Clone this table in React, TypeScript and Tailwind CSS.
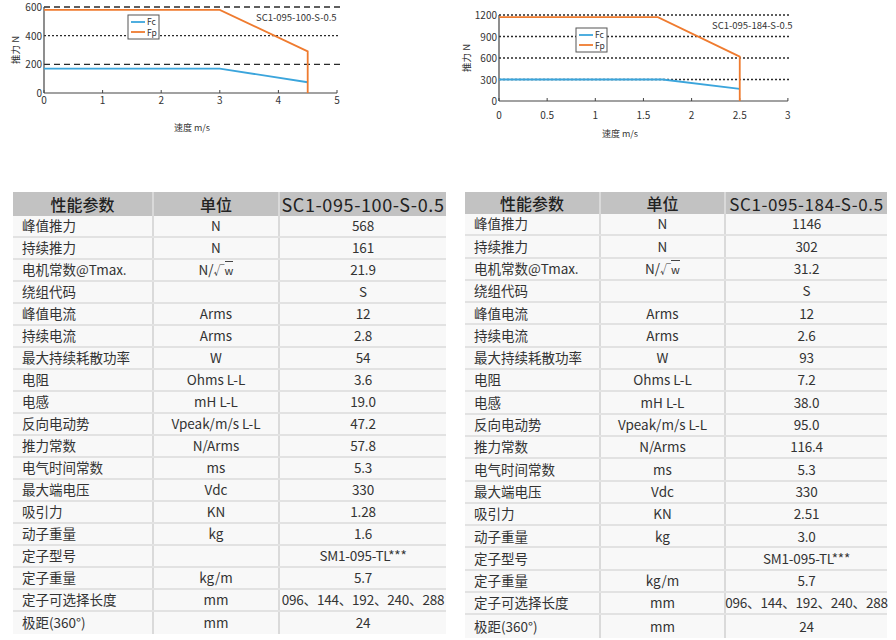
import React from "react";

type Pt = [number, number];

interface ChartSpec {
  width: number;
  x0: number;
  xUnit: number;
  xStep: number;
  xTicks: string[];
  y0: number;
  yUnit: number;
  yTicks: { v: number; label: string; dash: string }[];
  gridEnd: number;
  fp: Pt[];
  fc: Pt[];
  legend: { x: number; y: number };
  title: { x: number; y: number; text: string };
  yLabelX: number;
  xLabel: { x: number; y: number };
  tickLabelY: number;
}

const LEFT_CHART: ChartSpec = {
  width: 350,
  x0: 44,
  xUnit: 58.6,
  xStep: 1,
  xTicks: ["0", "1", "2", "3", "4", "5"],
  y0: 93,
  yUnit: 86 / 600,
  yTicks: [
    { v: 600, label: "600", dash: "6 4" },
    { v: 400, label: "400", dash: "2 2" },
    { v: 200, label: "200", dash: "6 4" },
    { v: 0, label: "0", dash: "" },
  ],
  gridEnd: 340,
  fp: [[0, 580], [3, 580], [4.5, 290], [4.5, 0]],
  fc: [[0, 170], [3, 170], [4.5, 75]],
  legend: { x: 128, y: 15 },
  title: { x: 256, y: 21, text: "SC1-095-100-S-0.5" },
  yLabelX: 16,
  xLabel: { x: 192, y: 131 },
  tickLabelY: 104,
};

const RIGHT_CHART: ChartSpec = {
  width: 340,
  x0: 39,
  xUnit: 96.3,
  xStep: 0.5,
  xTicks: ["0", "0.5", "1", "1.5", "2", "2.5", "3"],
  y0: 101,
  yUnit: 86 / 1200,
  yTicks: [
    { v: 1200, label: "1200", dash: "2 2" },
    { v: 900, label: "900", dash: "2 2" },
    { v: 600, label: "600", dash: "2 2" },
    { v: 300, label: "300", dash: "2 2" },
    { v: 0, label: "0", dash: "" },
  ],
  gridEnd: 329,
  fp: [[0, 1170], [1.65, 1170], [2.5, 620], [2.5, 0]],
  fc: [[0, 300], [1.7, 300], [2.5, 170]],
  legend: { x: 116, y: 28 },
  title: { x: 252, y: 29, text: "SC1-095-184-S-0.5" },
  yLabelX: 7,
  xLabel: { x: 160, y: 137 },
  tickLabelY: 119,
};

function ForceChart({ spec }: { spec: ChartSpec }) {
  const px = (v: number) => spec.x0 + v * spec.xUnit;
  const py = (v: number) => spec.y0 - v * spec.yUnit;
  const path = (pts: Pt[]) => pts.map(([x, y]) => `${px(x)},${py(y)}`).join(" ");
  const xEnd = px((spec.xTicks.length - 1) * spec.xStep);
  const font = "'Noto Sans CJK SC', 'Noto Sans', sans-serif";
  const yMid = (spec.y0 + py(spec.yTicks[0].v)) / 2;

  return (
    <svg width={spec.width} height={140} className="block shrink-0" style={{ fontFamily: font }}>
      {spec.yTicks.map((t) =>
        t.v === 0 ? null : (
          <line key={t.v} x1={spec.x0} x2={spec.gridEnd} y1={py(t.v)} y2={py(t.v)} stroke="#2a2a2a" strokeWidth={1.4} strokeDasharray={t.dash} />
        )
      )}
      <line x1={spec.x0} x2={xEnd} y1={spec.y0} y2={spec.y0} stroke="#444" strokeWidth={1.2} />
      <line x1={spec.x0} x2={spec.x0} y1={spec.y0} y2={py(spec.yTicks[0].v)} stroke="#444" strokeWidth={1.2} />
      {spec.xTicks.map((_, i) => (
        <line key={i} x1={px(i * spec.xStep)} x2={px(i * spec.xStep)} y1={spec.y0} y2={spec.y0 - 3} stroke="#444" strokeWidth={1} />
      ))}
      {spec.xTicks.map((l, i) => (
        <text key={l} x={px(i * spec.xStep)} y={spec.tickLabelY} fontSize={10} fill="#333" textAnchor="middle">{l}</text>
      ))}
      {spec.yTicks.map((t) => (
        <text key={t.label} x={spec.x0 - 2} y={py(t.v) + 4} fontSize={10} fill="#333" textAnchor="end">{t.label}</text>
      ))}
      <text x={spec.yLabelX} y={yMid} fontSize={9.5} fill="#333" textAnchor="middle" transform={`rotate(-90 ${spec.yLabelX} ${yMid})`} dominantBaseline="middle">
        推力   N
      </text>
      <text x={spec.xLabel.x} y={spec.xLabel.y} fontSize={9} fill="#333" textAnchor="middle">速度    m/s</text>
      <text x={spec.title.x} y={spec.title.y} fontSize={9.5} fill="#333">{spec.title.text}</text>

      <polyline points={path(spec.fc)} fill="none" stroke="#3ba5dc" strokeWidth={1.8} />
      <polyline points={path(spec.fp)} fill="none" stroke="#ef7b2f" strokeWidth={1.8} />

      <rect x={spec.legend.x} y={spec.legend.y} width={31} height={24} fill="#fff" stroke="#555" strokeWidth={1} />
      <line x1={spec.legend.x + 3} x2={spec.legend.x + 17} y1={spec.legend.y + 7} y2={spec.legend.y + 7} stroke="#3ba5dc" strokeWidth={1.8} />
      <line x1={spec.legend.x + 3} x2={spec.legend.x + 17} y1={spec.legend.y + 17} y2={spec.legend.y + 17} stroke="#ef7b2f" strokeWidth={1.8} />
      <text x={spec.legend.x + 19} y={spec.legend.y + 10} fontSize={8.5} fill="#333">Fc</text>
      <text x={spec.legend.x + 19} y={spec.legend.y + 20.5} fontSize={8.5} fill="#333">Fp</text>
    </svg>
  );
}

const PARAMS: [string, string][] = [
  ["峰值推力", "N"],
  ["持续推力", "N"],
  ["电机常数@Tmax.", "N/√w"],
  ["绕组代码", ""],
  ["峰值电流", "Arms"],
  ["持续电流", "Arms"],
  ["最大持续耗散功率", "W"],
  ["电阻", "Ohms L-L"],
  ["电感", "mH L-L"],
  ["反向电动势", "Vpeak/m/s L-L"],
  ["推力常数", "N/Arms"],
  ["电气时间常数", "ms"],
  ["最大端电压", "Vdc"],
  ["吸引力", "KN"],
  ["动子重量", "kg"],
  ["定子型号", ""],
  ["定子重量", "kg/m"],
  ["定子可选择长度", "mm"],
  ["极距(360°)", "mm"],
];

const LEFT_VALUES = ["568", "161", "21.9", "S", "12", "2.8", "54", "3.6", "19.0", "47.2", "57.8", "5.3", "330", "1.28", "1.6", "SM1-095-TL***", "5.7", "096、144、192、240、288", "24"];
const RIGHT_VALUES = ["1146", "302", "31.2", "S", "12", "2.6", "93", "7.2", "38.0", "95.0", "116.4", "5.3", "330", "2.51", "3.0", "SM1-095-TL***", "5.7", "096、144、192、240、288", "24"];

function Unit({ text }: { text: string }) {
  if (text === "N/√w") {
    return (
      <span>
        N/<span className="text-[11px]">√<span className="border-t border-[#444] text-[11px]">w</span></span>
      </span>
    );
  }
  return <span>{text}</span>;
}

function SpecTable({ model, values, cols, rowH, headH, modelSize }: { model: string; values: string[]; cols: string; rowH: string; headH: string; modelSize: string }) {
  return (
    <div className="flex flex-col">
      <div className={`grid ${cols} ${headH} bg-[#c2c2c2] text-[16px] font-medium leading-none text-[#222]`}>
        <div className="flex items-center justify-center border-r-2 border-[#d9d9d9]">性能参数</div>
        <div className="flex items-center justify-center border-r-2 border-[#d9d9d9]">单位</div>
        <div className={`flex items-center justify-center whitespace-nowrap font-normal tracking-[0.6px] ${modelSize}`}>{model}</div>
      </div>
      {PARAMS.map(([name, unit], i) => (
        <div key={name} className={`grid ${cols} ${rowH} border-b-2 border-[#e2e2e2] bg-[#f8f8f8] text-[13.5px] leading-none text-[#333] last:border-b-0`}>
          <div className="flex items-center border-r-2 border-[#dadada] pl-[9px]">{name}</div>
          <div className="flex items-center justify-center border-r-2 border-[#dadada]">
            <Unit text={unit} />
          </div>
          <div className="flex items-center justify-center whitespace-nowrap tracking-[-0.2px]">{values[i]}</div>
        </div>
      ))}
    </div>
  );
}

export default function App() {
  return (
    <div className="h-[640px] w-[896px] overflow-hidden bg-white font-['Noto_Sans_CJK_SC','Noto_Sans',sans-serif]">
      <div className="flex h-[140px]">
        <ForceChart spec={LEFT_CHART} />
        <div className="w-[110px] shrink-0" />
        <ForceChart spec={RIGHT_CHART} />
      </div>
      <div className="mt-[52px] flex items-start">
        <div className="ml-[13px] w-[433px]">
          <SpecTable model="SC1-095-100-S-0.5" values={LEFT_VALUES} cols="grid-cols-[141px_126px_166px]" rowH="h-[22px]" headH="h-[24px]" modelSize="text-[18px]" />
        </div>
        <div className="ml-[19px] w-[422px]">
          <SpecTable model="SC1-095-184-S-0.5" values={RIGHT_VALUES} cols="grid-cols-[136px_125px_161px]" rowH="h-[22.3px]" headH="h-[22px]" modelSize="text-[17px]" />
        </div>
      </div>
    </div>
  );
}
